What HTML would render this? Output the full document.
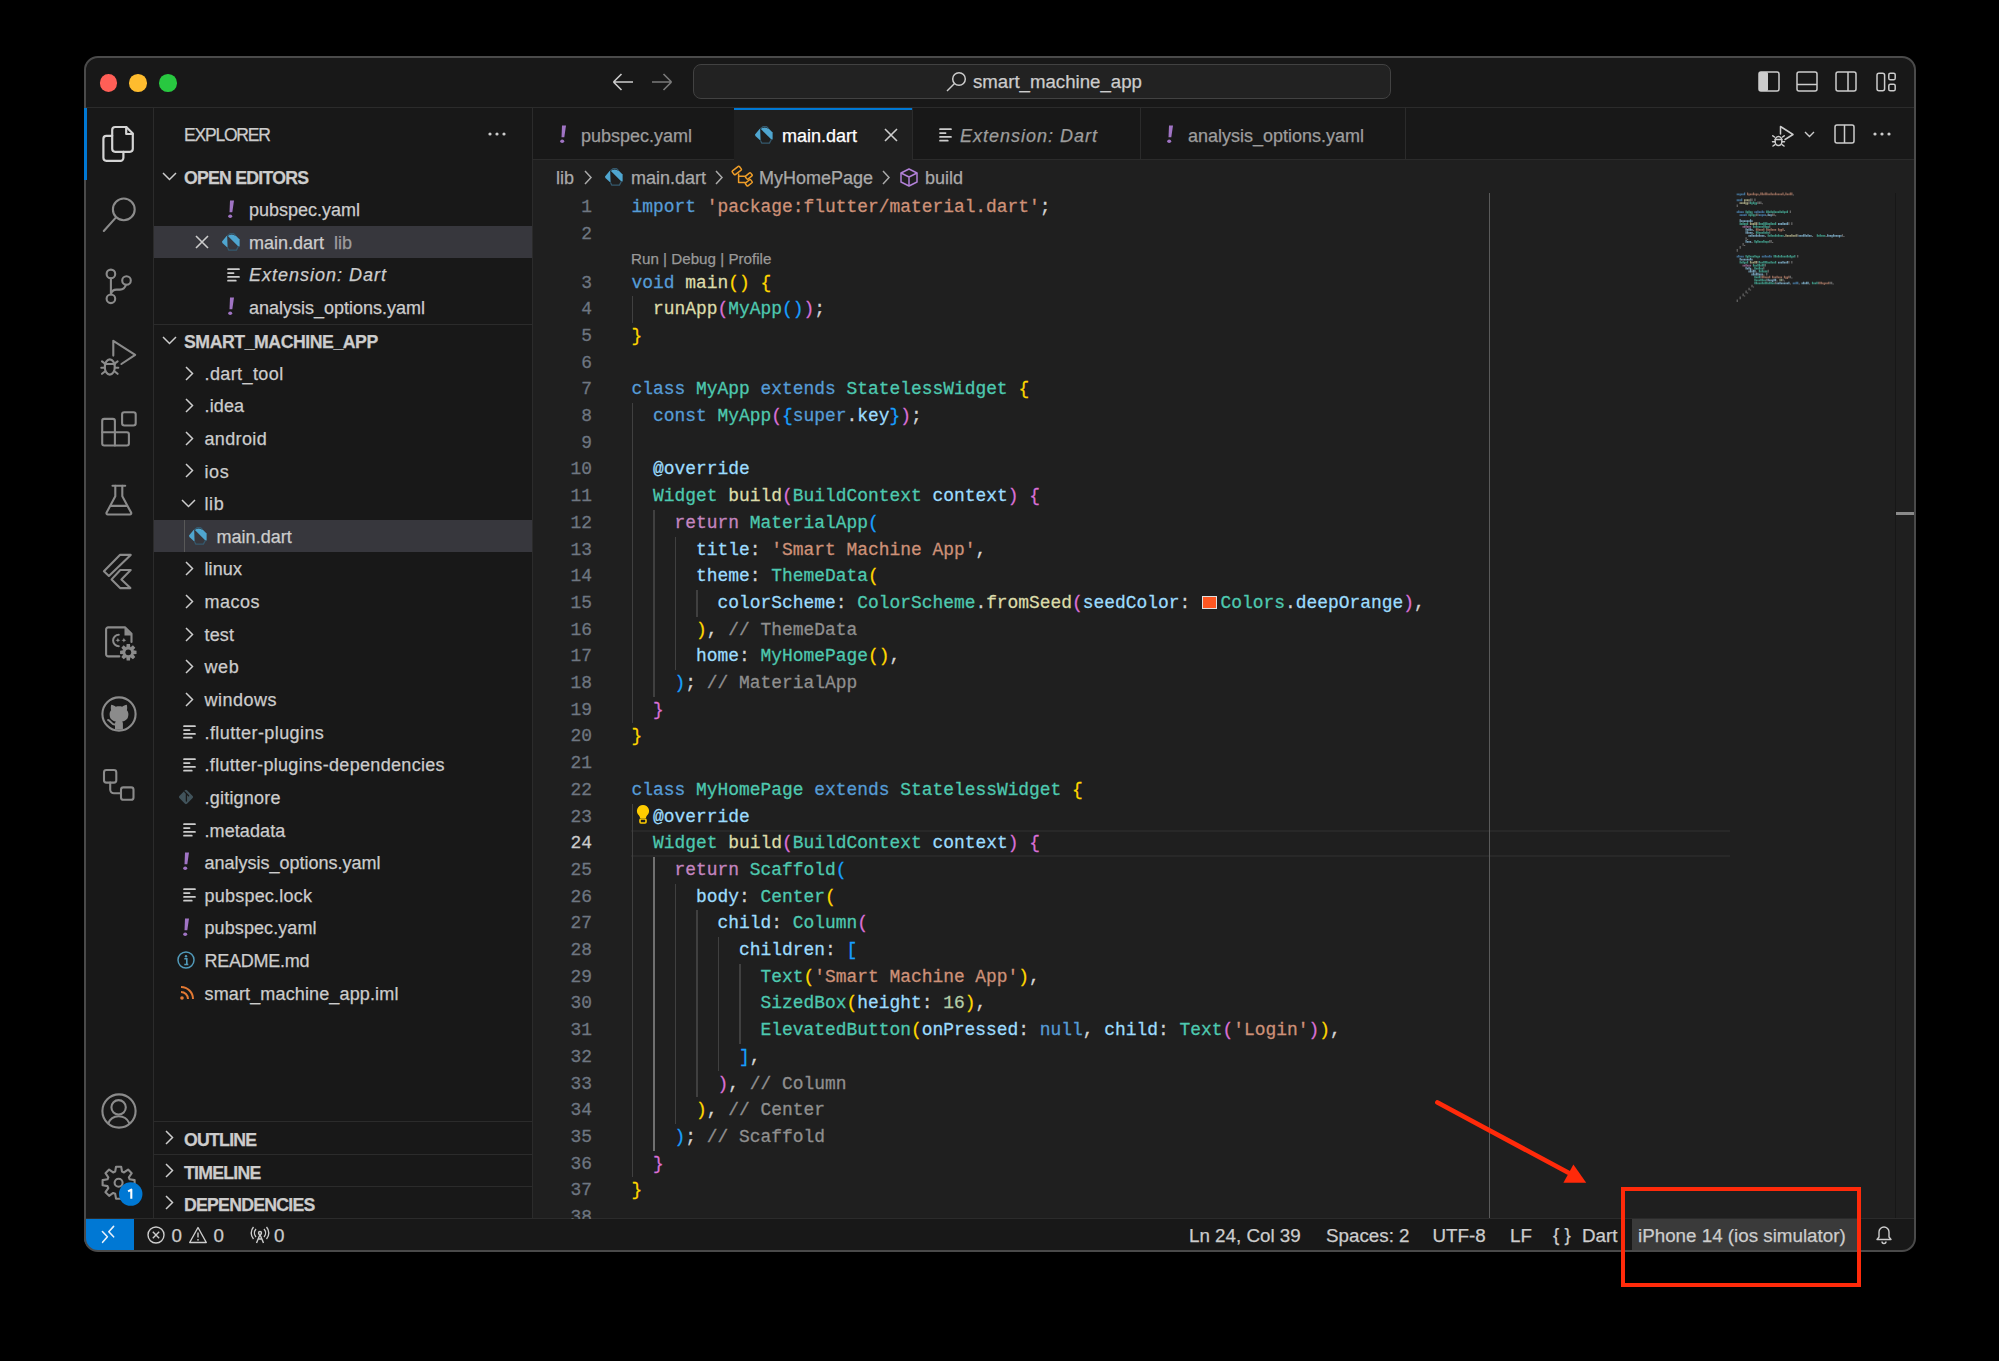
<!DOCTYPE html><html><head><meta charset='utf-8'><style>
*{margin:0;padding:0;box-sizing:border-box}
html,body{width:1999px;height:1361px;background:#000;overflow:hidden}
body{position:relative;font-family:"Liberation Sans",sans-serif;color:#cccccc;-webkit-text-stroke:0.25px currentColor}
.abs{position:absolute}
.win{position:absolute;left:84px;top:57px;width:1831px;height:1194px;border-radius:13px;overflow:hidden;background:#181818}
.winborder{position:absolute;left:83.5px;top:56px;width:1832.1px;height:1195.5px;border-radius:14px;border:2px solid #4a4a4a;pointer-events:none}
.hl{position:absolute;background:#2b2b2b}
.tx{position:absolute;white-space:pre;line-height:1}
.code{font-family:"Liberation Mono",monospace;font-size:17.91px;white-space:pre;color:#d4d4d4;-webkit-text-stroke:0.28px currentColor}
.k{color:#569cd6}.s{color:#ce9178}.f{color:#dcdcaa}.ty{color:#4ec9b0}.p{color:#9cdcfe}.r{color:#c586c0}.b1{color:#ffd700}.b2{color:#da70d6}.b3{color:#179fff}.c{color:#8f8f8f}.n{color:#b5cea8}.d{color:#d4d4d4}
.sw{display:inline-block;width:19.5px;height:10px;position:relative}
.sw i{display:none}
.row{position:absolute;left:0;width:378px;height:32.7px}
.sel{background:#37373d}
.lbl{position:absolute;font-size:18px;white-space:pre;color:#cccccc;line-height:1}
.hdr{position:absolute;font-size:17.7px;letter-spacing:-0.75px;font-weight:bold;white-space:pre;color:#cccccc;line-height:1}
svg{position:absolute;overflow:visible}
</style></head><body><div class="abs" style="left:0;top:0;width:1999px;height:1361px;clip-path:inset(57px 84px 110px 84px round 14px)"><div class="win"></div><div class="abs" style="left:533px;top:160px;width:1382px;height:1058px;background:#1f1f1f"></div><div class="hl" style="left:84px;top:107px;width:1831px;height:1px"></div><div class="hl" style="left:153px;top:108px;width:1px;height:1110px"></div><div class="hl" style="left:532px;top:108px;width:1px;height:1110px"></div><div class="hl" style="left:533px;top:159px;width:1382px;height:1px"></div><div class="hl" style="left:84px;top:1218px;width:1831px;height:1px"></div><div class="abs" style="left:99.60000000000001px;top:74.2px;width:17.6px;height:17.6px;border-radius:50%;background:#ff5f57"></div><div class="abs" style="left:129.39999999999998px;top:74.2px;width:17.6px;height:17.6px;border-radius:50%;background:#febc2e"></div><div class="abs" style="left:159.1px;top:74.2px;width:17.6px;height:17.6px;border-radius:50%;background:#28c840"></div><svg style="left:612px;top:72px" width="22" height="20"><path d="M1.5 10 H21 M1.5 10 L9.5 2 M1.5 10 L9.5 18" fill="none" stroke="#cccccc" stroke-width="1.6"/></svg><svg style="left:651px;top:72px" width="22" height="20"><path d="M20.5 10 H1 M20.5 10 L12.5 2 M20.5 10 L12.5 18" fill="none" stroke="#7a7a7a" stroke-width="1.6"/></svg><div class="abs" style="left:693px;top:64px;width:698px;height:35px;border-radius:8px;background:#222222;border:1.5px solid #424242"></div><svg style="left:945px;top:71px" width="22" height="22"><g fill="none" stroke="#cccccc" stroke-width="1.5"><circle cx="14" cy="8" r="6.3"/><path d="M9.5 12.5 L2 20"/></g></svg><div class="tx" style="left:973px;top:73px;font-size:18.65px;color:#cccccc">smart_machine_app</div><svg style="left:1758px;top:71px" width="140" height="22"><g fill="none" stroke="#cccccc" stroke-width="1.5">
    <rect x="1" y="1" width="20" height="19" rx="2"/><rect x="39" y="1" width="20" height="19" rx="2"/><path d="M39 13.5 h20"/>
    <rect x="78" y="1" width="20" height="19" rx="2"/><path d="M90 1 v19"/>
    <rect x="119" y="2.2" width="7.6" height="17.6" rx="2"/><rect x="130.8" y="2.2" width="6.4" height="6.6" rx="1.6"/><rect x="130.8" y="13.2" width="6.4" height="6.6" rx="1.6"/></g>
    <rect x="1" y="1" width="9" height="19" rx="1.5" fill="#cccccc"/></svg><div class="abs" style="left:83px;top:108px;width:3px;height:71.5px;background:#0078d4"></div><svg style="left:94px;top:118px" width="50" height="50" viewBox="0 0 50 50"><g fill="none" stroke="#d4d4d4" stroke-width="2.2" stroke-linejoin="round" stroke-linecap="round" >
    <path d="M21.2 9 H32.3 L38.8 15.5 V30.8 A3 3 0 0 1 35.8 33.8 H21.2 A3 3 0 0 1 18.2 30.8 V12 A3 3 0 0 1 21.2 9 Z"/>
    <path d="M32.2 9.2 V16 H38.6"/>
    <path d="M18.2 17.8 H12.4 A3 3 0 0 0 9.4 20.8 V39.8 A3 3 0 0 0 12.4 42.8 H26.4 A3 3 0 0 0 29.4 39.8 V33.8"/>
    </g></svg><svg style="left:94px;top:189px" width="50" height="50" viewBox="0 0 50 50"><g fill="none" stroke="#8b8b8b" stroke-width="2.1" stroke-linejoin="round" stroke-linecap="round" ><circle cx="29.8" cy="20.4" r="10.9"/><path d="M21.8 28.6 L9.8 42"/></g></svg><svg style="left:94px;top:261px" width="50" height="50" viewBox="0 0 50 50"><g fill="none" stroke="#8b8b8b" stroke-width="2.1" stroke-linejoin="round" stroke-linecap="round" ><circle cx="16.9" cy="12.9" r="4.3"/><circle cx="16.9" cy="37.8" r="4.3"/><circle cx="32.5" cy="19.5" r="4.3"/>
    <path d="M16.9 17.2 V33.5"/><path d="M32 23.8 C31 27 29 28.6 26 28.6 H22.5 C19.5 28.6 17.5 30.5 17 33"/></g></svg><svg style="left:94px;top:332px" width="50" height="50" viewBox="0 0 50 50"><g fill="none" stroke="#8b8b8b" stroke-width="2.1" stroke-linejoin="round" stroke-linecap="round" ><path d="M19.3 23.6 V8.8 L41.2 22.8 L27.4 32"/>
    <ellipse cx="15.8" cy="35" rx="5" ry="7.6"/><path d="M10.8 32 H20.8"/>
    <path d="M8 29.4 L11 31.6 M23.6 29.4 L20.6 31.6 M7.3 35.8 H10.8 M24.3 35.8 H20.8 M8 41.8 L11.2 39.2 M23.6 41.8 L20.4 39.2"/></g></svg><svg style="left:94px;top:404px" width="50" height="50" viewBox="0 0 50 50"><g fill="none" stroke="#8b8b8b" stroke-width="2.1" stroke-linejoin="round" stroke-linecap="round" stroke-linecap="butt"><path d="M10.2 14.9 H18.9 A2 2 0 0 1 20.9 16.9 V41.5 H10.2 A2 2 0 0 1 8.2 39.5 V16.9 A2 2 0 0 1 10.2 14.9 Z"/>
    <path d="M8.2 28.3 H32.9 A2 2 0 0 1 34.9 30.3 V39.5 A2 2 0 0 1 32.9 41.5 H20.9"/>
    <rect x="28.1" y="8.3" width="13.6" height="13.2" rx="2.2"/></g></svg><svg style="left:94px;top:475px" width="50" height="50" viewBox="0 0 50 50"><g fill="none" stroke="#8b8b8b" stroke-width="2.1" stroke-linejoin="round" stroke-linecap="round" ><path d="M18.5 10.7 H31.2"/><path d="M21.3 10.7 V21.3 L12.6 37.6 A1.3 1.3 0 0 0 13.8 39.5 H35.9 A1.3 1.3 0 0 0 37.1 37.6 L28.3 21.3 V10.7"/>
    <path d="M16.8 30.9 H32.6"/></g></svg><svg style="left:94px;top:547px" width="50" height="50" viewBox="0 0 50 50"><g fill="none" stroke="#8b8b8b" stroke-width="2.1" stroke-linejoin="round" stroke-linecap="round" ><path d="M25.9 7.9 H36.7 L14.9 29 L9.9 24.2 Z"/><path d="M26.3 23 H36.7 L27.4 32.5 L36.4 41.1 H26.1 L17.6 32.4 Z"/></g></svg><svg style="left:94px;top:618px" width="50" height="50" viewBox="0 0 50 50"><g fill="none" stroke="#8b8b8b" stroke-width="2.1" stroke-linejoin="round" stroke-linecap="round" stroke-linecap="butt"><path d="M25.3 38.4 H14.2 A2.1 2.1 0 0 1 12.1 36.3 V11.5 A2.1 2.1 0 0 1 14.2 9.4 H31.2 L37.5 15.7 V24"/>
    <path d="M24.8 16.8 A5.6 5.6 0 1 0 24.8 28.2" stroke-width="2"/></g>
    <path d="M30.5 9.8 L37.2 16.4 L37.2 17.5 L30.5 17.5 Z" fill="#8b8b8b"/>
    <path d="M23.9 19.8 L24.6 21.5 L26.3 22.2 L24.6 22.9 L23.9 24.6 L23.2 22.9 L21.5 22.2 L23.2 21.5 Z M29.9 19.8 L30.6 21.5 L32.3 22.2 L30.6 22.9 L29.9 24.6 L29.2 22.9 L27.5 22.2 L29.2 21.5 Z" fill="#8b8b8b"/><path d="M32.33 29.06 L32.63 26.07 L35.97 26.07 L36.27 29.06 L36.61 29.20 L38.94 27.30 L41.30 29.66 L39.40 31.99 L39.54 32.33 L42.53 32.63 L42.53 35.97 L39.54 36.27 L39.40 36.61 L41.30 38.94 L38.94 41.30 L36.61 39.40 L36.27 39.54 L35.97 42.53 L32.63 42.53 L32.33 39.54 L31.99 39.40 L29.66 41.30 L27.30 38.94 L29.20 36.61 L29.06 36.27 L26.07 35.97 L26.07 32.63 L29.06 32.33 L29.20 31.99 L27.30 29.66 L29.66 27.30 L31.99 29.20 Z" fill="#8b8b8b"/><circle cx="34.3" cy="34.3" r="2.9" fill="#181818"/></svg><svg style="left:94px;top:689px" width="50" height="50" viewBox="0 0 50 50"><g fill="none" stroke="#8b8b8b" stroke-width="2.1" stroke-linejoin="round" stroke-linecap="round" ><circle cx="25" cy="25" r="16.6"/></g><path fill="#8b8b8b" d="M21 40.6 V34.6 C21 33.8 21.3 33 21.8 32.4 C18 31.8 15.6 29.8 15.6 25.2 C15.6 23.6 16.2 22.2 17.1 21.2 C16.7 20 16.7 17.6 17.2 15.8 C18.8 15.8 20.6 16.8 21.8 17.8 C23.8 17.2 26.2 17.2 28.2 17.8 C29.4 16.8 31.2 15.8 32.8 15.8 C33.3 17.6 33.3 20 32.9 21.2 C33.8 22.2 34.4 23.6 34.4 25.2 C34.4 29.8 32 31.8 28.2 32.4 C28.7 33 28.9 33.8 28.9 34.6 V40.6 Z"/>
    <path d="M14.1 31 C16.5 31.5 17.5 35.4 20.8 35.6" fill="none" stroke="#8b8b8b" stroke-width="2" stroke-linecap="round"/></svg><svg style="left:94px;top:761px" width="50" height="50" viewBox="0 0 50 50"><g fill="none" stroke="#8b8b8b" stroke-width="2.1" stroke-linejoin="round" stroke-linecap="round" ><rect x="10" y="9" width="12.3" height="12.6" rx="2.4"/><rect x="27" y="26.4" width="12.5" height="12.4" rx="2.4"/>
    <path d="M16.2 21.6 V28.6 A3.7 3.7 0 0 0 19.9 32.3 H27"/></g></svg><svg style="left:94px;top:1086px" width="50" height="50" viewBox="0 0 50 50"><g fill="none" stroke="#8b8b8b" stroke-width="2.1" stroke-linejoin="round" stroke-linecap="round" ><circle cx="25" cy="25" r="16.6"/><circle cx="24.6" cy="21.3" r="7.2"/><path d="M14.3 37.5 C16 32.8 19.8 30.2 24.6 30.2 C29.6 30.2 33.4 32.8 35.3 37.1"/></g></svg><svg style="left:94px;top:1157px" width="50" height="50" viewBox="0 0 50 50"><g fill="none" stroke="#8b8b8b" stroke-width="2.1" stroke-linejoin="round" stroke-linecap="round" stroke-linecap="butt" stroke-linejoin="miter"><path d="M21.17 14.62 L22.02 9.71 L27.18 9.71 L28.03 14.62 L30.01 15.44 L34.08 12.57 L37.73 16.22 L34.86 20.29 L35.68 22.27 L40.59 23.12 L40.59 28.28 L35.68 29.13 L34.86 31.11 L37.73 35.18 L34.08 38.83 L30.01 35.96 L28.03 36.78 L27.18 41.69 L22.02 41.69 L21.17 36.78 L19.19 35.96 L15.12 38.83 L11.47 35.18 L14.34 31.11 L13.52 29.13 L8.61 28.28 L8.61 23.12 L13.52 22.27 L14.34 20.29 L11.47 16.22 L15.12 12.57 L19.19 15.44 Z"/><circle cx="24.6" cy="25.7" r="4"/></g><circle cx="36.7" cy="37.1" r="11.75" fill="#0078d4"/><path d="M34.1 34.4 L37.3 32.6 V41.8" fill="none" stroke="#ffffff" stroke-width="2.1" stroke-linejoin="round"/></svg><div class="tx" style="left:184px;top:126.5px;font-size:17.5px;letter-spacing:-1.2px;color:#cccccc">EXPLORER</div><svg style="left:488.0px;top:132.0px" width="18" height="4" viewBox="0 0 18 4" ><g fill="#cccccc"><circle cx="2" cy="2" r="1.6"/><circle cx="9" cy="2" r="1.6"/><circle cx="16" cy="2" r="1.6"/></g></svg><svg style="left:161.5px;top:172.0px" width="15" height="9" viewBox="0 0 15 9" ><path d="M1 1 L7.5 7.5 L14 1" fill="none" stroke="#cccccc" stroke-width="1.5"/></svg><div class="hdr" style="left:184px;top:170px">OPEN EDITORS</div><svg style="left:227.0px;top:199.5px" width="10" height="20" viewBox="0 0 10 20" ><path d="M3 0.6 L7 0.6 L5.3 12.2 L2.5 12.2 Z" fill="#a074c4"/><ellipse cx="3.2" cy="16.3" rx="2" ry="1.7" fill="#a074c4"/></svg><div class="lbl" style="left:249px;top:201.2px;">pubspec.yaml</div><div class="abs sel" style="left:154px;top:225.82999999999998px;width:378px;height:32.6px"></div><svg style="left:194.5px;top:235.13px" width="14" height="14" viewBox="0 0 14 14" ><path d="M1 1 L13 13 M13 1 L1 13" fill="none" stroke="#cccccc" stroke-width="1.6"/></svg><svg style="left:222.0px;top:233.13px" width="18" height="18" viewBox="0 0 18 18" ><path d="M5.4 2.6 L9.6 1.4 L13.6 2.6 L17.6 6.4 L17.6 13.4 L16.4 13.4 Z" fill="#4fa6d0"/>
    <path d="M4.8 2.8 L0 8.6 L0.4 10 L5.6 14.8 L5.2 3.6 Z" fill="#4fa6d0"/>
    <path d="M5.4 2.8 L8 0.7 L11.6 0.7 L13.6 2.6 M5.6 14.8 L6.8 17.1 L14.4 17.1 L16.4 13.4" fill="none" stroke="#35596d" stroke-width="1.2" stroke-linejoin="round"/></svg><div class="lbl" style="left:249px;top:233.82999999999998px;">main.dart</div><div class="lbl" style="left:334px;top:233.82999999999998px;color:#9d9d9d">lib</div><svg style="left:226.6px;top:267.76px" width="14" height="14" viewBox="0 0 14 14" ><g stroke="#cccccc" stroke-width="1.7" stroke-linecap="round"><path d="M1 1.2 h11 M1 5.1 h5.6 M1 8.9 h11 M1 12.7 h7.8"/></g></svg><div class="lbl" style="left:249px;top:266.46px;font-style:italic;letter-spacing:1px;">Extension: Dart</div><svg style="left:227.0px;top:297.39px" width="10" height="20" viewBox="0 0 10 20" ><path d="M3 0.6 L7 0.6 L5.3 12.2 L2.5 12.2 Z" fill="#a074c4"/><ellipse cx="3.2" cy="16.3" rx="2" ry="1.7" fill="#a074c4"/></svg><div class="lbl" style="left:249px;top:299.09px;">analysis_options.yaml</div><div class="hl" style="left:154px;top:323.5px;width:378px;height:1px"></div><svg style="left:161.5px;top:336.0px" width="15" height="9" viewBox="0 0 15 9" ><path d="M1 1 L7.5 7.5 L14 1" fill="none" stroke="#cccccc" stroke-width="1.5"/></svg><div class="hdr" style="left:184px;top:334px;letter-spacing:-0.45px">SMART_MACHINE_APP</div><svg style="left:184.5px;top:365.5px" width="9" height="15" viewBox="0 0 9 15" ><path d="M1 1 L7.5 7.5 L1 14" fill="none" stroke="#cccccc" stroke-width="1.5"/></svg><div class="lbl" style="left:204.5px;top:364.7px;letter-spacing:0.4px">.dart_tool</div><svg style="left:184.5px;top:398.13px" width="9" height="15" viewBox="0 0 9 15" ><path d="M1 1 L7.5 7.5 L1 14" fill="none" stroke="#cccccc" stroke-width="1.5"/></svg><div class="lbl" style="left:204.5px;top:397.33px;letter-spacing:0.15px">.idea</div><svg style="left:184.5px;top:430.76px" width="9" height="15" viewBox="0 0 9 15" ><path d="M1 1 L7.5 7.5 L1 14" fill="none" stroke="#cccccc" stroke-width="1.5"/></svg><div class="lbl" style="left:204.5px;top:429.96px;letter-spacing:0.35px">android</div><svg style="left:184.5px;top:463.39px" width="9" height="15" viewBox="0 0 9 15" ><path d="M1 1 L7.5 7.5 L1 14" fill="none" stroke="#cccccc" stroke-width="1.5"/></svg><div class="lbl" style="left:204.5px;top:462.59px;letter-spacing:0.6px">ios</div><svg style="left:180.5px;top:499.02px" width="15" height="9" viewBox="0 0 15 9" ><path d="M1 1 L7.5 7.5 L14 1" fill="none" stroke="#cccccc" stroke-width="1.5"/></svg><div class="lbl" style="left:204.5px;top:495.21999999999997px;letter-spacing:0.6px">lib</div><div class="abs sel" style="left:154px;top:519.85px;width:378px;height:32.6px"></div><div class="abs" style="left:184px;top:519.85px;width:1px;height:32.6px;background:#585858"></div><svg style="left:189.0px;top:527.15px" width="18" height="18" viewBox="0 0 18 18" ><path d="M5.4 2.6 L9.6 1.4 L13.6 2.6 L17.6 6.4 L17.6 13.4 L16.4 13.4 Z" fill="#4fa6d0"/>
    <path d="M4.8 2.8 L0 8.6 L0.4 10 L5.6 14.8 L5.2 3.6 Z" fill="#4fa6d0"/>
    <path d="M5.4 2.8 L8 0.7 L11.6 0.7 L13.6 2.6 M5.6 14.8 L6.8 17.1 L14.4 17.1 L16.4 13.4" fill="none" stroke="#35596d" stroke-width="1.2" stroke-linejoin="round"/></svg><div class="lbl" style="left:216.5px;top:527.85px;letter-spacing:0.04px">main.dart</div><svg style="left:184.5px;top:561.28px" width="9" height="15" viewBox="0 0 9 15" ><path d="M1 1 L7.5 7.5 L1 14" fill="none" stroke="#cccccc" stroke-width="1.5"/></svg><div class="lbl" style="left:204.5px;top:560.48px;letter-spacing:0.12px">linux</div><svg style="left:184.5px;top:593.9100000000001px" width="9" height="15" viewBox="0 0 9 15" ><path d="M1 1 L7.5 7.5 L1 14" fill="none" stroke="#cccccc" stroke-width="1.5"/></svg><div class="lbl" style="left:204.5px;top:593.1100000000001px;letter-spacing:0.5px">macos</div><svg style="left:184.5px;top:626.54px" width="9" height="15" viewBox="0 0 9 15" ><path d="M1 1 L7.5 7.5 L1 14" fill="none" stroke="#cccccc" stroke-width="1.5"/></svg><div class="lbl" style="left:204.5px;top:625.74px;letter-spacing:0.13px">test</div><svg style="left:184.5px;top:659.1700000000001px" width="9" height="15" viewBox="0 0 9 15" ><path d="M1 1 L7.5 7.5 L1 14" fill="none" stroke="#cccccc" stroke-width="1.5"/></svg><div class="lbl" style="left:204.5px;top:658.3700000000001px;letter-spacing:0.6px">web</div><svg style="left:184.5px;top:691.8px" width="9" height="15" viewBox="0 0 9 15" ><path d="M1 1 L7.5 7.5 L1 14" fill="none" stroke="#cccccc" stroke-width="1.5"/></svg><div class="lbl" style="left:204.5px;top:691.0px;letter-spacing:0.5px">windows</div><svg style="left:182.6px;top:724.9300000000001px" width="14" height="14" viewBox="0 0 14 14" ><g stroke="#cccccc" stroke-width="1.7" stroke-linecap="round"><path d="M1 1.2 h11 M1 5.1 h5.6 M1 8.9 h11 M1 12.7 h7.8"/></g></svg><div class="lbl" style="left:204.5px;top:723.6300000000001px;letter-spacing:0.42px">.flutter-plugins</div><svg style="left:182.6px;top:757.5600000000001px" width="14" height="14" viewBox="0 0 14 14" ><g stroke="#cccccc" stroke-width="1.7" stroke-linecap="round"><path d="M1 1.2 h11 M1 5.1 h5.6 M1 8.9 h11 M1 12.7 h7.8"/></g></svg><div class="lbl" style="left:204.5px;top:756.2600000000001px;letter-spacing:0.32px">.flutter-plugins-dependencies</div><svg style="left:177.4px;top:788.19px" width="18" height="18" viewBox="0 0 18 18" ><rect x="3.6" y="3.6" width="10.8" height="10.8" rx="1.4" transform="rotate(45 9 9)" fill="#41535b"/><path d="M7.6 3.6 L11.6 7.8 M9.4 5.6 V13" stroke="#1a1a1a" stroke-width="1.3" stroke-linecap="round"/></svg><div class="lbl" style="left:204.5px;top:788.8900000000001px;letter-spacing:0.22px">.gitignore</div><svg style="left:182.6px;top:822.82px" width="14" height="14" viewBox="0 0 14 14" ><g stroke="#cccccc" stroke-width="1.7" stroke-linecap="round"><path d="M1 1.2 h11 M1 5.1 h5.6 M1 8.9 h11 M1 12.7 h7.8"/></g></svg><div class="lbl" style="left:204.5px;top:821.5200000000001px;letter-spacing:0.09px">.metadata</div><svg style="left:182.0px;top:852.45px" width="10" height="20" viewBox="0 0 10 20" ><path d="M3 0.6 L7 0.6 L5.3 12.2 L2.5 12.2 Z" fill="#a074c4"/><ellipse cx="3.2" cy="16.3" rx="2" ry="1.7" fill="#a074c4"/></svg><div class="lbl" style="left:204.5px;top:854.1500000000001px;letter-spacing:0px">analysis_options.yaml</div><svg style="left:182.6px;top:888.08px" width="14" height="14" viewBox="0 0 14 14" ><g stroke="#cccccc" stroke-width="1.7" stroke-linecap="round"><path d="M1 1.2 h11 M1 5.1 h5.6 M1 8.9 h11 M1 12.7 h7.8"/></g></svg><div class="lbl" style="left:204.5px;top:886.7800000000001px;letter-spacing:0.22px">pubspec.lock</div><svg style="left:182.0px;top:917.71px" width="10" height="20" viewBox="0 0 10 20" ><path d="M3 0.6 L7 0.6 L5.3 12.2 L2.5 12.2 Z" fill="#a074c4"/><ellipse cx="3.2" cy="16.3" rx="2" ry="1.7" fill="#a074c4"/></svg><div class="lbl" style="left:204.5px;top:919.4100000000001px;letter-spacing:0.09px">pubspec.yaml</div><svg style="left:177.4px;top:951.34px" width="18" height="18" viewBox="0 0 18 18" ><circle cx="9" cy="9" r="8" fill="none" stroke="#519aba" stroke-width="1.5"/><circle cx="9" cy="5.2" r="1.2" fill="#519aba"/><path d="M7.3 7.8 h2.5 v5.7 M7.3 13.5 h4" fill="none" stroke="#519aba" stroke-width="1.6"/></svg><div class="lbl" style="left:204.5px;top:952.0400000000001px;letter-spacing:-0.26px">README.md</div><svg style="left:178.5px;top:984.97px" width="16" height="16" viewBox="0 0 16 16" ><g fill="none" stroke="#e37933" stroke-width="2"><path d="M2 7 a7 7 0 0 1 7 7"/><path d="M2 2 a12 12 0 0 1 12 12"/></g><circle cx="3" cy="13" r="1.8" fill="#e37933"/></svg><div class="lbl" style="left:204.5px;top:984.6700000000001px;letter-spacing:0.14px">smart_machine_app.iml</div><div class="hl" style="left:154px;top:1121.0px;width:378px;height:1px"></div><svg style="left:164.5px;top:1130.0px" width="9" height="15" viewBox="0 0 9 15" ><path d="M1 1 L7.5 7.5 L1 14" fill="none" stroke="#cccccc" stroke-width="1.5"/></svg><div class="hdr" style="left:184px;top:1132.0px">OUTLINE</div><div class="hl" style="left:154px;top:1153.6px;width:378px;height:1px"></div><svg style="left:164.5px;top:1162.6px" width="9" height="15" viewBox="0 0 9 15" ><path d="M1 1 L7.5 7.5 L1 14" fill="none" stroke="#cccccc" stroke-width="1.5"/></svg><div class="hdr" style="left:184px;top:1164.6px">TIMELINE</div><div class="hl" style="left:154px;top:1186.2px;width:378px;height:1px"></div><svg style="left:164.5px;top:1195.2px" width="9" height="15" viewBox="0 0 9 15" ><path d="M1 1 L7.5 7.5 L1 14" fill="none" stroke="#cccccc" stroke-width="1.5"/></svg><div class="hdr" style="left:184px;top:1197.2px">DEPENDENCIES</div><div class="hl" style="left:734px;top:108px;width:1px;height:51px"></div><svg style="left:558.5px;top:124.5px" width="10" height="20" viewBox="0 0 10 20" ><path d="M3 0.6 L7 0.6 L5.3 12.2 L2.5 12.2 Z" fill="#a074c4"/><ellipse cx="3.2" cy="16.3" rx="2" ry="1.7" fill="#a074c4"/></svg><div class="lbl" style="left:581px;top:126.7px;color:#9d9d9d;">pubspec.yaml</div><div class="abs" style="left:734px;top:108px;width:178px;height:52px;background:#1f1f1f"></div><div class="abs" style="left:734px;top:108px;width:178px;height:2px;background:#0078d4"></div><svg style="left:883.5px;top:127.5px" width="14" height="14" viewBox="0 0 14 14" ><path d="M1 1 L13 13 M13 1 L1 13" fill="none" stroke="#cccccc" stroke-width="1.6"/></svg><div class="hl" style="left:912px;top:108px;width:1px;height:51px"></div><svg style="left:755.0px;top:125.5px" width="18" height="18" viewBox="0 0 18 18" ><path d="M5.4 2.6 L9.6 1.4 L13.6 2.6 L17.6 6.4 L17.6 13.4 L16.4 13.4 Z" fill="#4fa6d0"/>
    <path d="M4.8 2.8 L0 8.6 L0.4 10 L5.6 14.8 L5.2 3.6 Z" fill="#4fa6d0"/>
    <path d="M5.4 2.8 L8 0.7 L11.6 0.7 L13.6 2.6 M5.6 14.8 L6.8 17.1 L14.4 17.1 L16.4 13.4" fill="none" stroke="#35596d" stroke-width="1.2" stroke-linejoin="round"/></svg><div class="lbl" style="left:782px;top:126.7px;color:#ffffff;">main.dart</div><div class="hl" style="left:1140px;top:108px;width:1px;height:51px"></div><svg style="left:938.5px;top:127.5px" width="14" height="14" viewBox="0 0 14 14" ><g stroke="#cccccc" stroke-width="1.7" stroke-linecap="round"><path d="M1 1.2 h11 M1 5.1 h5.6 M1 8.9 h11 M1 12.7 h7.8"/></g></svg><div class="lbl" style="left:960px;top:126.7px;color:#9d9d9d;font-style:italic;letter-spacing:1px;">Extension: Dart</div><div class="hl" style="left:1405px;top:108px;width:1px;height:51px"></div><svg style="left:1165.5px;top:124.5px" width="10" height="20" viewBox="0 0 10 20" ><path d="M3 0.6 L7 0.6 L5.3 12.2 L2.5 12.2 Z" fill="#a074c4"/><ellipse cx="3.2" cy="16.3" rx="2" ry="1.7" fill="#a074c4"/></svg><div class="lbl" style="left:1188px;top:126.7px;color:#9d9d9d;">analysis_options.yaml</div><svg style="left:1771.0px;top:124.5px" width="24" height="23" viewBox="0 0 24 23" ><g fill="none" stroke="#cccccc" stroke-width="1.5" stroke-linejoin="round" stroke-linecap="round"><path d="M9.5 9 V1.5 L22 9.5 L14 14.5"/>
    <ellipse cx="7.5" cy="16" rx="3.4" ry="4.6"/><path d="M4.1 14.6 H10.9 M3.5 12 L1.8 10.8 M11.5 12 L13.2 10.8 M4 16.8 H1.5 M11 16.8 H13.5 M4 19.6 L2 21 M11 19.6 L13 21"/></g></svg><svg style="left:1803.5px;top:131.0px" width="11" height="7" viewBox="0 0 11 7" ><path d="M1 1 L5.5 5.5 L10 1" fill="none" stroke="#cccccc" stroke-width="1.4"/></svg><svg style="left:1833.5px;top:124.0px" width="21" height="20" viewBox="0 0 21 20" ><g fill="none" stroke="#cccccc" stroke-width="1.5"><rect x="1" y="1" width="19" height="18" rx="2"/><path d="M10.5 1 v18"/></g></svg><svg style="left:1873.0px;top:132.0px" width="18" height="4" viewBox="0 0 18 4" ><g fill="#cccccc"><circle cx="2" cy="2" r="1.6"/><circle cx="9" cy="2" r="1.6"/><circle cx="16" cy="2" r="1.6"/></g></svg><div class="lbl" style="left:556px;top:168.5px;color:#a9a9a9">lib</div><svg style="left:583.5px;top:169.5px" width="9" height="15" viewBox="0 0 9 15" ><path d="M1 1 L7 7.5 L1 14" fill="none" stroke="#a9a9a9" stroke-width="1.5"/></svg><svg style="left:604.5px;top:168.0px" width="18" height="18" viewBox="0 0 18 18" ><path d="M5.4 2.6 L9.6 1.4 L13.6 2.6 L17.6 6.4 L17.6 13.4 L16.4 13.4 Z" fill="#4fa6d0"/>
    <path d="M4.8 2.8 L0 8.6 L0.4 10 L5.6 14.8 L5.2 3.6 Z" fill="#4fa6d0"/>
    <path d="M5.4 2.8 L8 0.7 L11.6 0.7 L13.6 2.6 M5.6 14.8 L6.8 17.1 L14.4 17.1 L16.4 13.4" fill="none" stroke="#35596d" stroke-width="1.2" stroke-linejoin="round"/></svg><div class="lbl" style="left:631px;top:168.5px;color:#a9a9a9">main.dart</div><svg style="left:714.5px;top:169.5px" width="9" height="15" viewBox="0 0 9 15" ><path d="M1 1 L7 7.5 L1 14" fill="none" stroke="#a9a9a9" stroke-width="1.5"/></svg><svg style="left:728.0px;top:164.0px" width="28" height="24" viewBox="0 0 28 24" ><g fill="none" stroke="#ee9d28" stroke-width="1.5" stroke-linejoin="round">
    <rect x="-4.5" y="-2.3" width="9" height="4.6" rx="0.8" transform="translate(8.8 6.5) rotate(-38)"/>
    <rect x="-3.3" y="-1.9" width="6.6" height="3.8" rx="0.8" transform="translate(20.8 12) rotate(-38)"/>
    <rect x="-3.3" y="-1.9" width="6.6" height="3.8" rx="0.8" transform="translate(20.8 18.8) rotate(-38)"/>
    <path d="M10.6 9.4 V18.6 H17.6 M10.6 12.3 H17.6"/></g></svg><div class="lbl" style="left:759px;top:168.5px;color:#a9a9a9">MyHomePage</div><svg style="left:881.5px;top:169.5px" width="9" height="15" viewBox="0 0 9 15" ><path d="M1 1 L7 7.5 L1 14" fill="none" stroke="#a9a9a9" stroke-width="1.5"/></svg><svg style="left:900.0px;top:167.5px" width="18" height="19" viewBox="0 0 18 19" ><g fill="none" stroke="#b180d7" stroke-width="1.5" stroke-linejoin="round"><path d="M9 1 L17 5 V14 L9 18 L1 14 V5 Z"/><path d="M1 5 L9 9 L17 5 M9 9 V18"/></g></svg><div class="lbl" style="left:925px;top:168.5px;color:#a9a9a9">build</div><div class="abs" style="left:631px;top:830.2px;width:1099px;height:26.7px;border-top:2px solid #282828;border-bottom:2px solid #282828"></div><div class="abs" style="left:1488.5px;top:193px;width:1.5px;height:1025px;background:#5a5a5a"></div><div class="abs" style="left:631.5px;top:296.20000000000005px;width:1.5px;height:26.69999999999999px;background:#404040"></div><div class="abs" style="left:631.5px;top:403.0px;width:1.5px;height:320.4px;background:#404040"></div><div class="abs" style="left:653.0px;top:509.8px;width:1.5px;height:186.90000000000003px;background:#404040"></div><div class="abs" style="left:674.5px;top:536.5px;width:1.5px;height:133.5000000000001px;background:#404040"></div><div class="abs" style="left:696.0px;top:589.9px;width:1.5px;height:26.700000000000045px;background:#404040"></div><div class="abs" style="left:631.5px;top:803.5px;width:1.5px;height:373.79999999999995px;background:#404040"></div><div class="abs" style="left:653.0px;top:856.9px;width:1.5px;height:293.69999999999993px;background:#707070"></div><div class="abs" style="left:674.5px;top:883.6px;width:1.5px;height:240.29999999999984px;background:#404040"></div><div class="abs" style="left:696.0px;top:910.3px;width:1.5px;height:186.9000000000001px;background:#404040"></div><div class="abs" style="left:717.5px;top:937.0px;width:1.5px;height:133.5px;background:#404040"></div><div class="abs" style="left:739.0px;top:963.7px;width:1.5px;height:80.09999999999991px;background:#404040"></div><div class="code abs" style="left:520px;width:72px;text-align:right;top:194.0px;line-height:26.7px;color:#6e7681">1</div><div class="code abs" style="left:520px;width:72px;text-align:right;top:220.7px;line-height:26.7px;color:#6e7681">2</div><div class="code abs" style="left:520px;width:72px;text-align:right;top:269.5px;line-height:26.7px;color:#6e7681">3</div><div class="code abs" style="left:520px;width:72px;text-align:right;top:296.20000000000005px;line-height:26.7px;color:#6e7681">4</div><div class="code abs" style="left:520px;width:72px;text-align:right;top:322.90000000000003px;line-height:26.7px;color:#6e7681">5</div><div class="code abs" style="left:520px;width:72px;text-align:right;top:349.6px;line-height:26.7px;color:#6e7681">6</div><div class="code abs" style="left:520px;width:72px;text-align:right;top:376.3px;line-height:26.7px;color:#6e7681">7</div><div class="code abs" style="left:520px;width:72px;text-align:right;top:403.0px;line-height:26.7px;color:#6e7681">8</div><div class="code abs" style="left:520px;width:72px;text-align:right;top:429.70000000000005px;line-height:26.7px;color:#6e7681">9</div><div class="code abs" style="left:520px;width:72px;text-align:right;top:456.4px;line-height:26.7px;color:#6e7681">10</div><div class="code abs" style="left:520px;width:72px;text-align:right;top:483.1px;line-height:26.7px;color:#6e7681">11</div><div class="code abs" style="left:520px;width:72px;text-align:right;top:509.8px;line-height:26.7px;color:#6e7681">12</div><div class="code abs" style="left:520px;width:72px;text-align:right;top:536.5px;line-height:26.7px;color:#6e7681">13</div><div class="code abs" style="left:520px;width:72px;text-align:right;top:563.1999999999999px;line-height:26.7px;color:#6e7681">14</div><div class="code abs" style="left:520px;width:72px;text-align:right;top:589.9px;line-height:26.7px;color:#6e7681">15</div><div class="code abs" style="left:520px;width:72px;text-align:right;top:616.6px;line-height:26.7px;color:#6e7681">16</div><div class="code abs" style="left:520px;width:72px;text-align:right;top:643.3000000000001px;line-height:26.7px;color:#6e7681">17</div><div class="code abs" style="left:520px;width:72px;text-align:right;top:670.0px;line-height:26.7px;color:#6e7681">18</div><div class="code abs" style="left:520px;width:72px;text-align:right;top:696.6999999999999px;line-height:26.7px;color:#6e7681">19</div><div class="code abs" style="left:520px;width:72px;text-align:right;top:723.4px;line-height:26.7px;color:#6e7681">20</div><div class="code abs" style="left:520px;width:72px;text-align:right;top:750.1px;line-height:26.7px;color:#6e7681">21</div><div class="code abs" style="left:520px;width:72px;text-align:right;top:776.8px;line-height:26.7px;color:#6e7681">22</div><div class="code abs" style="left:520px;width:72px;text-align:right;top:803.5px;line-height:26.7px;color:#6e7681">23</div><div class="code abs" style="left:520px;width:72px;text-align:right;top:830.2px;line-height:26.7px;color:#cccccc">24</div><div class="code abs" style="left:520px;width:72px;text-align:right;top:856.9px;line-height:26.7px;color:#6e7681">25</div><div class="code abs" style="left:520px;width:72px;text-align:right;top:883.6px;line-height:26.7px;color:#6e7681">26</div><div class="code abs" style="left:520px;width:72px;text-align:right;top:910.3px;line-height:26.7px;color:#6e7681">27</div><div class="code abs" style="left:520px;width:72px;text-align:right;top:937.0px;line-height:26.7px;color:#6e7681">28</div><div class="code abs" style="left:520px;width:72px;text-align:right;top:963.7px;line-height:26.7px;color:#6e7681">29</div><div class="code abs" style="left:520px;width:72px;text-align:right;top:990.4px;line-height:26.7px;color:#6e7681">30</div><div class="code abs" style="left:520px;width:72px;text-align:right;top:1017.1px;line-height:26.7px;color:#6e7681">31</div><div class="code abs" style="left:520px;width:72px;text-align:right;top:1043.8px;line-height:26.7px;color:#6e7681">32</div><div class="code abs" style="left:520px;width:72px;text-align:right;top:1070.5px;line-height:26.7px;color:#6e7681">33</div><div class="code abs" style="left:520px;width:72px;text-align:right;top:1097.1999999999998px;line-height:26.7px;color:#6e7681">34</div><div class="code abs" style="left:520px;width:72px;text-align:right;top:1123.8999999999999px;line-height:26.7px;color:#6e7681">35</div><div class="code abs" style="left:520px;width:72px;text-align:right;top:1150.6px;line-height:26.7px;color:#6e7681">36</div><div class="code abs" style="left:520px;width:72px;text-align:right;top:1177.2999999999997px;line-height:26.7px;color:#6e7681">37</div><div class="code abs" style="left:520px;width:72px;text-align:right;top:1204.0px;line-height:26.7px;color:#6e7681">38</div><div class="code abs" style="left:631.5px;top:194.0px;line-height:26.7px"><span class="k">import</span> <span class="s">&#x27;package:flutter/material.dart&#x27;</span>;</div><div class="code abs" style="left:631.5px;top:269.5px;line-height:26.7px"><span class="k">void</span> <span class="f">main</span><span class="b1">()</span> <span class="b1">{</span></div><div class="code abs" style="left:631.5px;top:296.20000000000005px;line-height:26.7px">  <span class="f">runApp</span><span class="b2">(</span><span class="ty">MyApp</span><span class="b3">()</span><span class="b2">)</span>;</div><div class="code abs" style="left:631.5px;top:322.90000000000003px;line-height:26.7px"><span class="b1">}</span></div><div class="code abs" style="left:631.5px;top:376.3px;line-height:26.7px"><span class="k">class</span> <span class="ty">MyApp</span> <span class="k">extends</span> <span class="ty">StatelessWidget</span> <span class="b1">{</span></div><div class="code abs" style="left:631.5px;top:403.0px;line-height:26.7px">  <span class="k">const</span> <span class="ty">MyApp</span><span class="b2">(</span><span class="b3">{</span><span class="k">super</span>.<span class="p">key</span><span class="b3">}</span><span class="b2">)</span>;</div><div class="code abs" style="left:631.5px;top:456.4px;line-height:26.7px">  <span class="p">@override</span></div><div class="code abs" style="left:631.5px;top:483.1px;line-height:26.7px">  <span class="ty">Widget</span> <span class="f">build</span><span class="b2">(</span><span class="ty">BuildContext</span> <span class="p">context</span><span class="b2">)</span> <span class="b2">{</span></div><div class="code abs" style="left:631.5px;top:509.8px;line-height:26.7px">    <span class="r">return</span> <span class="ty">MaterialApp</span><span class="b3">(</span></div><div class="code abs" style="left:631.5px;top:536.5px;line-height:26.7px">      <span class="p">title</span>: <span class="s">&#x27;Smart Machine App&#x27;</span>,</div><div class="code abs" style="left:631.5px;top:563.1999999999999px;line-height:26.7px">      <span class="p">theme</span>: <span class="ty">ThemeData</span><span class="b1">(</span></div><div class="code abs" style="left:631.5px;top:589.9px;line-height:26.7px">        <span class="p">colorScheme</span>: <span class="ty">ColorScheme</span>.<span class="f">fromSeed</span><span class="b2">(</span><span class="p">seedColor</span>: <span class="sw"><i></i></span><span class="ty">Colors</span>.<span class="p">deepOrange</span><span class="b2">)</span>,</div><div class="code abs" style="left:631.5px;top:616.6px;line-height:26.7px">      <span class="b1">)</span>, <span class="c">// ThemeData</span></div><div class="code abs" style="left:631.5px;top:643.3000000000001px;line-height:26.7px">      <span class="p">home</span>: <span class="ty">MyHomePage</span><span class="b1">()</span>,</div><div class="code abs" style="left:631.5px;top:670.0px;line-height:26.7px">    <span class="b3">)</span>; <span class="c">// MaterialApp</span></div><div class="code abs" style="left:631.5px;top:696.6999999999999px;line-height:26.7px">  <span class="b2">}</span></div><div class="code abs" style="left:631.5px;top:723.4px;line-height:26.7px"><span class="b1">}</span></div><div class="code abs" style="left:631.5px;top:776.8px;line-height:26.7px"><span class="k">class</span> <span class="ty">MyHomePage</span> <span class="k">extends</span> <span class="ty">StatelessWidget</span> <span class="b1">{</span></div><div class="code abs" style="left:631.5px;top:803.5px;line-height:26.7px">  <span class="p">@override</span></div><div class="code abs" style="left:631.5px;top:830.2px;line-height:26.7px">  <span class="ty">Widget</span> <span class="f">build</span><span class="b2">(</span><span class="ty">BuildContext</span> <span class="p">context</span><span class="b2">)</span> <span class="b2">{</span></div><div class="code abs" style="left:631.5px;top:856.9px;line-height:26.7px">    <span class="r">return</span> <span class="ty">Scaffold</span><span class="b3">(</span></div><div class="code abs" style="left:631.5px;top:883.6px;line-height:26.7px">      <span class="p">body</span>: <span class="ty">Center</span><span class="b1">(</span></div><div class="code abs" style="left:631.5px;top:910.3px;line-height:26.7px">        <span class="p">child</span>: <span class="ty">Column</span><span class="b2">(</span></div><div class="code abs" style="left:631.5px;top:937.0px;line-height:26.7px">          <span class="p">children</span>: <span class="b3">[</span></div><div class="code abs" style="left:631.5px;top:963.7px;line-height:26.7px">            <span class="ty">Text</span><span class="b1">(</span><span class="s">&#x27;Smart Machine App&#x27;</span><span class="b1">)</span>,</div><div class="code abs" style="left:631.5px;top:990.4px;line-height:26.7px">            <span class="ty">SizedBox</span><span class="b1">(</span><span class="p">height</span>: <span class="n">16</span><span class="b1">)</span>,</div><div class="code abs" style="left:631.5px;top:1017.1px;line-height:26.7px">            <span class="ty">ElevatedButton</span><span class="b1">(</span><span class="p">onPressed</span>: <span class="k">null</span>, <span class="p">child</span>: <span class="ty">Text</span><span class="b2">(</span><span class="s">&#x27;Login&#x27;</span><span class="b2">)</span><span class="b1">)</span>,</div><div class="code abs" style="left:631.5px;top:1043.8px;line-height:26.7px">          <span class="b3">]</span>,</div><div class="code abs" style="left:631.5px;top:1070.5px;line-height:26.7px">        <span class="b2">)</span>, <span class="c">// Column</span></div><div class="code abs" style="left:631.5px;top:1097.1999999999998px;line-height:26.7px">      <span class="b1">)</span>, <span class="c">// Center</span></div><div class="code abs" style="left:631.5px;top:1123.8999999999999px;line-height:26.7px">    <span class="b3">)</span>; <span class="c">// Scaffold</span></div><div class="code abs" style="left:631.5px;top:1150.6px;line-height:26.7px">  <span class="b2">}</span></div><div class="code abs" style="left:631.5px;top:1177.2999999999997px;line-height:26.7px"><span class="b1">}</span></div><div class="abs" style="left:1202.3px;top:595.5px;width:15.2px;height:13.3px;background:#ff5722;border:1.2px solid #e0e0e0"></div><div class="tx" style="left:631px;top:250.89999999999998px;font-size:15.2px;color:#999999">Run | Debug | Profile</div><svg style="left:636.0px;top:804.0500000000001px" width="14" height="20" viewBox="0 0 14 20" ><path d="M7 1 a6 6 0 0 1 4 10.5 c-0.7 0.7 -1 1.5 -1 2.5 H4 c0 -1 -0.3 -1.8 -1 -2.5 A6 6 0 0 1 7 1z" fill="#ffcc00"/><rect x="4" y="15" width="6" height="4" rx="1" fill="none" stroke="#ffcc00" stroke-width="1.6"/></svg><svg width="1999" height="1361" style="left:0;top:0"><path d="M1736.65 193.40h1.2v1.8h-1.2zM1738.12 193.40h1.2v1.8h-1.2zM1739.60 193.40h1.2v2.4h-1.2zM1741.08 193.40h1.2v1.8h-1.2zM1742.55 193.40h1.2v1.8h-1.2zM1744.03 192.60h1.2v2.6h-1.2zM1736.65 199.34h1.2v1.8h-1.2zM1738.12 199.34h1.2v1.8h-1.2zM1739.60 199.34h1.2v1.8h-1.2zM1741.08 198.54h1.2v2.6h-1.2zM1736.65 211.22h1.2v1.8h-1.2zM1738.12 210.42h1.2v2.6h-1.2zM1739.60 211.22h1.2v1.8h-1.2zM1741.08 211.22h1.2v1.8h-1.2zM1742.55 211.22h1.2v1.8h-1.2zM1754.35 211.22h1.2v1.8h-1.2zM1755.83 211.22h1.2v1.8h-1.2zM1757.30 210.42h1.2v2.6h-1.2zM1758.78 211.22h1.2v1.8h-1.2zM1760.25 211.22h1.2v1.8h-1.2zM1761.73 210.42h1.2v2.6h-1.2zM1763.20 211.22h1.2v1.8h-1.2zM1739.60 214.19h1.2v1.8h-1.2zM1741.08 214.19h1.2v1.8h-1.2zM1742.55 214.19h1.2v1.8h-1.2zM1744.03 214.19h1.2v1.8h-1.2zM1745.50 213.39h1.2v2.6h-1.2zM1758.78 214.19h1.2v1.8h-1.2zM1760.25 214.19h1.2v1.8h-1.2zM1761.73 214.19h1.2v2.4h-1.2zM1763.20 214.19h1.2v1.8h-1.2zM1764.68 214.19h1.2v1.8h-1.2zM1736.65 255.77h1.2v1.8h-1.2zM1738.12 254.97h1.2v2.6h-1.2zM1739.60 255.77h1.2v1.8h-1.2zM1741.08 255.77h1.2v1.8h-1.2zM1742.55 255.77h1.2v1.8h-1.2zM1761.73 255.77h1.2v1.8h-1.2zM1763.20 255.77h1.2v1.8h-1.2zM1764.68 254.97h1.2v2.6h-1.2zM1766.15 255.77h1.2v1.8h-1.2zM1767.62 255.77h1.2v1.8h-1.2zM1769.10 254.97h1.2v2.6h-1.2zM1770.58 255.77h1.2v1.8h-1.2zM1792.70 282.50h1.2v1.8h-1.2zM1794.18 282.50h1.2v1.8h-1.2zM1795.65 281.70h1.2v2.6h-1.2zM1797.12 281.70h1.2v2.6h-1.2z" fill="#569cd6" fill-opacity="0.65"/><path d="M1746.98 192.60h1.2v2.6h-1.2zM1748.45 193.40h1.2v2.4h-1.2zM1749.93 193.40h1.2v1.8h-1.2zM1751.40 193.40h1.2v1.8h-1.2zM1752.88 192.60h1.2v2.6h-1.2zM1754.35 193.40h1.2v1.8h-1.2zM1755.83 193.40h1.2v2.4h-1.2zM1757.30 193.40h1.2v1.8h-1.2zM1758.78 194.40h1.2v1.0h-1.2zM1760.25 192.60h1.2v2.6h-1.2zM1761.73 192.60h1.2v2.6h-1.2zM1763.20 193.40h1.2v1.8h-1.2zM1764.68 192.60h1.2v2.6h-1.2zM1766.15 192.60h1.2v2.6h-1.2zM1767.62 193.40h1.2v1.8h-1.2zM1769.10 193.40h1.2v1.8h-1.2zM1770.58 192.60h1.2v2.6h-1.2zM1772.05 193.40h1.2v1.8h-1.2zM1773.53 193.40h1.2v1.8h-1.2zM1775.00 192.60h1.2v2.6h-1.2zM1776.48 193.40h1.2v1.8h-1.2zM1777.95 193.40h1.2v1.8h-1.2zM1779.43 193.40h1.2v1.8h-1.2zM1780.90 193.40h1.2v1.8h-1.2zM1782.38 192.60h1.2v2.6h-1.2zM1783.85 194.40h1.2v1.0h-1.2zM1785.33 192.60h1.2v2.6h-1.2zM1786.80 193.40h1.2v1.8h-1.2zM1788.28 193.40h1.2v1.8h-1.2zM1789.75 192.60h1.2v2.6h-1.2zM1791.23 192.60h1.2v2.6h-1.2zM1755.83 228.24h1.2v2.6h-1.2zM1757.30 228.24h1.2v2.6h-1.2zM1758.78 229.04h1.2v1.8h-1.2zM1760.25 229.04h1.2v1.8h-1.2zM1761.73 229.04h1.2v1.8h-1.2zM1763.20 228.24h1.2v2.6h-1.2zM1766.15 228.24h1.2v2.6h-1.2zM1767.62 229.04h1.2v1.8h-1.2zM1769.10 229.04h1.2v1.8h-1.2zM1770.58 228.24h1.2v2.6h-1.2zM1772.05 229.04h1.2v1.8h-1.2zM1773.53 229.04h1.2v1.8h-1.2zM1775.00 229.04h1.2v1.8h-1.2zM1777.95 228.24h1.2v2.6h-1.2zM1779.43 229.04h1.2v2.4h-1.2zM1780.90 229.04h1.2v2.4h-1.2zM1782.38 228.24h1.2v2.6h-1.2zM1761.73 275.76h1.2v2.6h-1.2zM1763.20 275.76h1.2v2.6h-1.2zM1764.68 276.56h1.2v1.8h-1.2zM1766.15 276.56h1.2v1.8h-1.2zM1767.62 276.56h1.2v1.8h-1.2zM1769.10 275.76h1.2v2.6h-1.2zM1772.05 275.76h1.2v2.6h-1.2zM1773.53 276.56h1.2v1.8h-1.2zM1775.00 276.56h1.2v1.8h-1.2zM1776.48 275.76h1.2v2.6h-1.2zM1777.95 276.56h1.2v1.8h-1.2zM1779.43 276.56h1.2v1.8h-1.2zM1780.90 276.56h1.2v1.8h-1.2zM1783.85 275.76h1.2v2.6h-1.2zM1785.33 276.56h1.2v2.4h-1.2zM1786.80 276.56h1.2v2.4h-1.2zM1788.28 275.76h1.2v2.6h-1.2zM1819.25 281.70h1.2v2.6h-1.2zM1820.73 281.70h1.2v2.6h-1.2zM1822.20 282.50h1.2v1.8h-1.2zM1823.68 282.50h1.2v2.4h-1.2zM1825.15 282.50h1.2v1.8h-1.2zM1826.62 282.50h1.2v1.8h-1.2zM1828.10 281.70h1.2v2.6h-1.2z" fill="#ce9178" fill-opacity="0.65"/><path d="M1792.70 194.40h1.2v1.0h-1.2zM1749.93 198.54h1.2v2.6h-1.2zM1751.40 198.54h1.2v2.6h-1.2zM1754.35 198.54h1.2v2.6h-1.2zM1748.45 201.51h1.2v2.6h-1.2zM1757.30 201.51h1.2v2.6h-1.2zM1758.78 201.51h1.2v2.6h-1.2zM1760.25 201.51h1.2v2.6h-1.2zM1761.73 203.31h1.2v1.0h-1.2zM1736.65 204.48h1.2v2.6h-1.2zM1789.75 210.42h1.2v2.6h-1.2zM1755.83 213.39h1.2v2.6h-1.2zM1757.30 213.39h1.2v2.6h-1.2zM1766.15 215.19h1.2v1.0h-1.2zM1772.05 213.39h1.2v2.6h-1.2zM1773.53 213.39h1.2v2.6h-1.2zM1775.00 215.19h1.2v1.0h-1.2zM1757.30 222.30h1.2v2.6h-1.2zM1788.28 222.30h1.2v2.6h-1.2zM1791.23 222.30h1.2v2.6h-1.2zM1769.10 225.27h1.2v2.6h-1.2zM1752.88 230.04h1.2v1.0h-1.2zM1783.85 230.04h1.2v1.0h-1.2zM1752.88 233.01h1.2v1.0h-1.2zM1769.10 231.21h1.2v2.6h-1.2zM1764.68 235.98h1.2v1.0h-1.2zM1783.85 235.98h1.2v1.0h-1.2zM1797.12 234.18h1.2v2.6h-1.2zM1811.88 235.98h1.2v1.0h-1.2zM1825.59 235.98h1.2v1.0h-1.2zM1841.82 234.18h1.2v2.6h-1.2zM1843.29 235.98h1.2v1.0h-1.2zM1745.50 237.15h1.2v2.6h-1.2zM1746.98 238.95h1.2v1.0h-1.2zM1751.40 241.92h1.2v1.0h-1.2zM1769.10 240.12h1.2v2.6h-1.2zM1770.58 240.12h1.2v2.6h-1.2zM1772.05 241.92h1.2v1.0h-1.2zM1742.55 243.09h1.2v2.6h-1.2zM1744.03 244.89h1.2v1.0h-1.2zM1739.60 246.06h1.2v2.6h-1.2zM1736.65 249.03h1.2v2.6h-1.2zM1797.12 254.97h1.2v2.6h-1.2zM1757.30 260.91h1.2v2.6h-1.2zM1788.28 260.91h1.2v2.6h-1.2zM1791.23 260.91h1.2v2.6h-1.2zM1764.68 263.88h1.2v2.6h-1.2zM1751.40 268.65h1.2v1.0h-1.2zM1763.20 266.85h1.2v2.6h-1.2zM1755.83 271.62h1.2v1.0h-1.2zM1767.62 269.82h1.2v2.6h-1.2zM1763.20 274.59h1.2v1.0h-1.2zM1766.15 272.79h1.2v2.6h-1.2zM1760.25 275.76h1.2v2.6h-1.2zM1789.75 275.76h1.2v2.6h-1.2zM1791.23 277.56h1.2v1.0h-1.2zM1766.15 278.73h1.2v2.6h-1.2zM1776.48 280.53h1.2v1.0h-1.2zM1782.38 278.73h1.2v2.6h-1.2zM1783.85 280.53h1.2v1.0h-1.2zM1775.00 281.70h1.2v2.6h-1.2zM1789.75 283.50h1.2v1.0h-1.2zM1798.60 283.50h1.2v1.0h-1.2zM1808.93 283.50h1.2v1.0h-1.2zM1817.78 281.70h1.2v2.6h-1.2zM1829.58 281.70h1.2v2.6h-1.2zM1831.05 281.70h1.2v2.6h-1.2zM1832.53 283.50h1.2v1.0h-1.2zM1751.40 284.67h1.2v2.6h-1.2zM1752.88 286.47h1.2v1.0h-1.2zM1748.45 287.64h1.2v2.6h-1.2zM1749.93 289.44h1.2v1.0h-1.2zM1745.50 290.61h1.2v2.6h-1.2zM1746.98 292.41h1.2v1.0h-1.2zM1742.55 293.58h1.2v2.6h-1.2zM1744.03 295.38h1.2v1.0h-1.2zM1739.60 296.55h1.2v2.6h-1.2zM1736.65 299.52h1.2v2.6h-1.2z" fill="#d4d4d4" fill-opacity="0.4"/><path d="M1744.03 199.34h1.2v1.8h-1.2zM1745.50 199.34h1.2v1.8h-1.2zM1746.98 199.34h1.2v1.8h-1.2zM1748.45 199.34h1.2v1.8h-1.2zM1739.60 202.31h1.2v1.8h-1.2zM1741.08 202.31h1.2v1.8h-1.2zM1742.55 202.31h1.2v1.8h-1.2zM1744.03 201.51h1.2v2.6h-1.2zM1745.50 202.31h1.2v2.4h-1.2zM1746.98 202.31h1.2v2.4h-1.2zM1749.93 222.30h1.2v2.6h-1.2zM1751.40 223.10h1.2v1.8h-1.2zM1752.88 223.10h1.2v1.8h-1.2zM1754.35 222.30h1.2v2.6h-1.2zM1755.83 222.30h1.2v2.6h-1.2zM1785.33 234.18h1.2v2.6h-1.2zM1786.80 234.98h1.2v1.8h-1.2zM1788.28 234.98h1.2v1.8h-1.2zM1789.75 234.98h1.2v1.8h-1.2zM1791.23 234.18h1.2v2.6h-1.2zM1792.70 234.98h1.2v1.8h-1.2zM1794.18 234.98h1.2v1.8h-1.2zM1795.65 234.18h1.2v2.6h-1.2zM1749.93 260.91h1.2v2.6h-1.2zM1751.40 261.71h1.2v1.8h-1.2zM1752.88 261.71h1.2v1.8h-1.2zM1754.35 260.91h1.2v2.6h-1.2zM1755.83 260.91h1.2v2.6h-1.2z" fill="#dcdcaa" fill-opacity="0.65"/><path d="M1749.93 201.51h1.2v2.6h-1.2zM1751.40 202.31h1.2v2.4h-1.2zM1752.88 201.51h1.2v2.6h-1.2zM1754.35 202.31h1.2v2.4h-1.2zM1755.83 202.31h1.2v2.4h-1.2zM1745.50 210.42h1.2v2.6h-1.2zM1746.98 211.22h1.2v2.4h-1.2zM1748.45 210.42h1.2v2.6h-1.2zM1749.93 211.22h1.2v2.4h-1.2zM1751.40 211.22h1.2v2.4h-1.2zM1766.15 210.42h1.2v2.6h-1.2zM1767.62 210.42h1.2v2.6h-1.2zM1769.10 211.22h1.2v1.8h-1.2zM1770.58 210.42h1.2v2.6h-1.2zM1772.05 211.22h1.2v1.8h-1.2zM1773.53 210.42h1.2v2.6h-1.2zM1775.00 211.22h1.2v1.8h-1.2zM1776.48 211.22h1.2v1.8h-1.2zM1777.95 211.22h1.2v1.8h-1.2zM1779.43 210.42h1.2v2.6h-1.2zM1780.90 211.22h1.2v1.8h-1.2zM1782.38 210.42h1.2v2.6h-1.2zM1783.85 211.22h1.2v2.4h-1.2zM1785.33 211.22h1.2v1.8h-1.2zM1786.80 210.42h1.2v2.6h-1.2zM1748.45 213.39h1.2v2.6h-1.2zM1749.93 214.19h1.2v2.4h-1.2zM1751.40 213.39h1.2v2.6h-1.2zM1752.88 214.19h1.2v2.4h-1.2zM1754.35 214.19h1.2v2.4h-1.2zM1739.60 222.30h1.2v2.6h-1.2zM1741.08 223.10h1.2v1.8h-1.2zM1742.55 222.30h1.2v2.6h-1.2zM1744.03 223.10h1.2v2.4h-1.2zM1745.50 223.10h1.2v1.8h-1.2zM1746.98 222.30h1.2v2.6h-1.2zM1758.78 222.30h1.2v2.6h-1.2zM1760.25 223.10h1.2v1.8h-1.2zM1761.73 223.10h1.2v1.8h-1.2zM1763.20 222.30h1.2v2.6h-1.2zM1764.68 222.30h1.2v2.6h-1.2zM1766.15 222.30h1.2v2.6h-1.2zM1767.62 223.10h1.2v1.8h-1.2zM1769.10 223.10h1.2v1.8h-1.2zM1770.58 222.30h1.2v2.6h-1.2zM1772.05 223.10h1.2v1.8h-1.2zM1773.53 223.10h1.2v1.8h-1.2zM1775.00 222.30h1.2v2.6h-1.2zM1752.88 225.27h1.2v2.6h-1.2zM1754.35 226.07h1.2v1.8h-1.2zM1755.83 225.27h1.2v2.6h-1.2zM1757.30 226.07h1.2v1.8h-1.2zM1758.78 226.07h1.2v1.8h-1.2zM1760.25 226.07h1.2v1.8h-1.2zM1761.73 226.07h1.2v1.8h-1.2zM1763.20 225.27h1.2v2.6h-1.2zM1764.68 225.27h1.2v2.6h-1.2zM1766.15 226.07h1.2v2.4h-1.2zM1767.62 226.07h1.2v2.4h-1.2zM1755.83 231.21h1.2v2.6h-1.2zM1757.30 231.21h1.2v2.6h-1.2zM1758.78 232.01h1.2v1.8h-1.2zM1760.25 232.01h1.2v1.8h-1.2zM1761.73 232.01h1.2v1.8h-1.2zM1763.20 231.21h1.2v2.6h-1.2zM1764.68 232.01h1.2v1.8h-1.2zM1766.15 231.21h1.2v2.6h-1.2zM1767.62 232.01h1.2v1.8h-1.2zM1767.62 234.18h1.2v2.6h-1.2zM1769.10 234.98h1.2v1.8h-1.2zM1770.58 234.18h1.2v2.6h-1.2zM1772.05 234.98h1.2v1.8h-1.2zM1773.53 234.98h1.2v1.8h-1.2zM1775.00 234.18h1.2v2.6h-1.2zM1776.48 234.98h1.2v1.8h-1.2zM1777.95 234.18h1.2v2.6h-1.2zM1779.43 234.98h1.2v1.8h-1.2zM1780.90 234.98h1.2v1.8h-1.2zM1782.38 234.98h1.2v1.8h-1.2zM1816.74 234.18h1.2v2.6h-1.2zM1818.22 234.98h1.2v1.8h-1.2zM1819.69 234.18h1.2v2.6h-1.2zM1821.17 234.98h1.2v1.8h-1.2zM1822.64 234.98h1.2v1.8h-1.2zM1824.12 234.98h1.2v1.8h-1.2zM1754.35 240.12h1.2v2.6h-1.2zM1755.83 240.92h1.2v2.4h-1.2zM1757.30 240.12h1.2v2.6h-1.2zM1758.78 240.92h1.2v1.8h-1.2zM1760.25 240.92h1.2v1.8h-1.2zM1761.73 240.92h1.2v1.8h-1.2zM1763.20 240.12h1.2v2.6h-1.2zM1764.68 240.92h1.2v1.8h-1.2zM1766.15 240.92h1.2v2.4h-1.2zM1767.62 240.92h1.2v1.8h-1.2zM1745.50 254.97h1.2v2.6h-1.2zM1746.98 255.77h1.2v2.4h-1.2zM1748.45 254.97h1.2v2.6h-1.2zM1749.93 255.77h1.2v1.8h-1.2zM1751.40 255.77h1.2v1.8h-1.2zM1752.88 255.77h1.2v1.8h-1.2zM1754.35 254.97h1.2v2.6h-1.2zM1755.83 255.77h1.2v1.8h-1.2zM1757.30 255.77h1.2v2.4h-1.2zM1758.78 255.77h1.2v1.8h-1.2zM1773.53 254.97h1.2v2.6h-1.2zM1775.00 254.97h1.2v2.6h-1.2zM1776.48 255.77h1.2v1.8h-1.2zM1777.95 254.97h1.2v2.6h-1.2zM1779.43 255.77h1.2v1.8h-1.2zM1780.90 254.97h1.2v2.6h-1.2zM1782.38 255.77h1.2v1.8h-1.2zM1783.85 255.77h1.2v1.8h-1.2zM1785.33 255.77h1.2v1.8h-1.2zM1786.80 254.97h1.2v2.6h-1.2zM1788.28 255.77h1.2v1.8h-1.2zM1789.75 254.97h1.2v2.6h-1.2zM1791.23 255.77h1.2v2.4h-1.2zM1792.70 255.77h1.2v1.8h-1.2zM1794.18 254.97h1.2v2.6h-1.2zM1739.60 260.91h1.2v2.6h-1.2zM1741.08 261.71h1.2v1.8h-1.2zM1742.55 260.91h1.2v2.6h-1.2zM1744.03 261.71h1.2v2.4h-1.2zM1745.50 261.71h1.2v1.8h-1.2zM1746.98 260.91h1.2v2.6h-1.2zM1758.78 260.91h1.2v2.6h-1.2zM1760.25 261.71h1.2v1.8h-1.2zM1761.73 261.71h1.2v1.8h-1.2zM1763.20 260.91h1.2v2.6h-1.2zM1764.68 260.91h1.2v2.6h-1.2zM1766.15 260.91h1.2v2.6h-1.2zM1767.62 261.71h1.2v1.8h-1.2zM1769.10 261.71h1.2v1.8h-1.2zM1770.58 260.91h1.2v2.6h-1.2zM1772.05 261.71h1.2v1.8h-1.2zM1773.53 261.71h1.2v1.8h-1.2zM1775.00 260.91h1.2v2.6h-1.2zM1752.88 263.88h1.2v2.6h-1.2zM1754.35 264.68h1.2v1.8h-1.2zM1755.83 264.68h1.2v1.8h-1.2zM1757.30 263.88h1.2v2.6h-1.2zM1758.78 263.88h1.2v2.6h-1.2zM1760.25 264.68h1.2v1.8h-1.2zM1761.73 263.88h1.2v2.6h-1.2zM1763.20 263.88h1.2v2.6h-1.2zM1754.35 266.85h1.2v2.6h-1.2zM1755.83 267.65h1.2v1.8h-1.2zM1757.30 267.65h1.2v1.8h-1.2zM1758.78 266.85h1.2v2.6h-1.2zM1760.25 267.65h1.2v1.8h-1.2zM1761.73 267.65h1.2v1.8h-1.2zM1758.78 269.82h1.2v2.6h-1.2zM1760.25 270.62h1.2v1.8h-1.2zM1761.73 269.82h1.2v2.6h-1.2zM1763.20 270.62h1.2v1.8h-1.2zM1764.68 270.62h1.2v1.8h-1.2zM1766.15 270.62h1.2v1.8h-1.2zM1754.35 275.76h1.2v2.6h-1.2zM1755.83 276.56h1.2v1.8h-1.2zM1757.30 276.56h1.2v1.8h-1.2zM1758.78 275.76h1.2v2.6h-1.2zM1754.35 278.73h1.2v2.6h-1.2zM1755.83 279.53h1.2v1.8h-1.2zM1757.30 279.53h1.2v1.8h-1.2zM1758.78 279.53h1.2v1.8h-1.2zM1760.25 278.73h1.2v2.6h-1.2zM1761.73 278.73h1.2v2.6h-1.2zM1763.20 279.53h1.2v1.8h-1.2zM1764.68 279.53h1.2v1.8h-1.2zM1754.35 281.70h1.2v2.6h-1.2zM1755.83 281.70h1.2v2.6h-1.2zM1757.30 282.50h1.2v1.8h-1.2zM1758.78 282.50h1.2v1.8h-1.2zM1760.25 282.50h1.2v1.8h-1.2zM1761.73 281.70h1.2v2.6h-1.2zM1763.20 282.50h1.2v1.8h-1.2zM1764.68 281.70h1.2v2.6h-1.2zM1766.15 281.70h1.2v2.6h-1.2zM1767.62 282.50h1.2v1.8h-1.2zM1769.10 281.70h1.2v2.6h-1.2zM1770.58 281.70h1.2v2.6h-1.2zM1772.05 282.50h1.2v1.8h-1.2zM1773.53 282.50h1.2v1.8h-1.2zM1811.88 281.70h1.2v2.6h-1.2zM1813.35 282.50h1.2v1.8h-1.2zM1814.83 282.50h1.2v1.8h-1.2zM1816.30 281.70h1.2v2.6h-1.2z" fill="#4ec9b0" fill-opacity="0.65"/><path d="M1767.62 213.39h1.2v2.6h-1.2zM1769.10 214.19h1.2v1.8h-1.2zM1770.58 214.19h1.2v2.4h-1.2zM1739.60 219.33h1.2v2.6h-1.2zM1741.08 220.13h1.2v1.8h-1.2zM1742.55 220.13h1.2v1.8h-1.2zM1744.03 220.13h1.2v1.8h-1.2zM1745.50 220.13h1.2v1.8h-1.2zM1746.98 220.13h1.2v1.8h-1.2zM1748.45 220.13h1.2v1.8h-1.2zM1749.93 219.33h1.2v2.6h-1.2zM1751.40 220.13h1.2v1.8h-1.2zM1777.95 223.10h1.2v1.8h-1.2zM1779.43 223.10h1.2v1.8h-1.2zM1780.90 223.10h1.2v1.8h-1.2zM1782.38 222.30h1.2v2.6h-1.2zM1783.85 223.10h1.2v1.8h-1.2zM1785.33 223.10h1.2v1.8h-1.2zM1786.80 222.30h1.2v2.6h-1.2zM1745.50 228.24h1.2v2.6h-1.2zM1746.98 229.04h1.2v1.8h-1.2zM1748.45 228.24h1.2v2.6h-1.2zM1749.93 228.24h1.2v2.6h-1.2zM1751.40 229.04h1.2v1.8h-1.2zM1745.50 231.21h1.2v2.6h-1.2zM1746.98 231.21h1.2v2.6h-1.2zM1748.45 232.01h1.2v1.8h-1.2zM1749.93 232.01h1.2v1.8h-1.2zM1751.40 232.01h1.2v1.8h-1.2zM1748.45 234.98h1.2v1.8h-1.2zM1749.93 234.98h1.2v1.8h-1.2zM1751.40 234.18h1.2v2.6h-1.2zM1752.88 234.98h1.2v1.8h-1.2zM1754.35 234.98h1.2v1.8h-1.2zM1755.83 234.18h1.2v2.6h-1.2zM1757.30 234.98h1.2v1.8h-1.2zM1758.78 234.18h1.2v2.6h-1.2zM1760.25 234.98h1.2v1.8h-1.2zM1761.73 234.98h1.2v1.8h-1.2zM1763.20 234.98h1.2v1.8h-1.2zM1798.60 234.98h1.2v1.8h-1.2zM1800.08 234.98h1.2v1.8h-1.2zM1801.55 234.98h1.2v1.8h-1.2zM1803.03 234.18h1.2v2.6h-1.2zM1804.50 234.18h1.2v2.6h-1.2zM1805.98 234.98h1.2v1.8h-1.2zM1807.45 234.18h1.2v2.6h-1.2zM1808.93 234.98h1.2v1.8h-1.2zM1810.40 234.98h1.2v1.8h-1.2zM1827.07 234.18h1.2v2.6h-1.2zM1828.54 234.98h1.2v1.8h-1.2zM1830.02 234.98h1.2v1.8h-1.2zM1831.49 234.98h1.2v2.4h-1.2zM1832.97 234.18h1.2v2.6h-1.2zM1834.44 234.98h1.2v1.8h-1.2zM1835.92 234.98h1.2v1.8h-1.2zM1837.39 234.98h1.2v1.8h-1.2zM1838.87 234.98h1.2v2.4h-1.2zM1840.34 234.98h1.2v1.8h-1.2zM1745.50 240.12h1.2v2.6h-1.2zM1746.98 240.92h1.2v1.8h-1.2zM1748.45 240.92h1.2v1.8h-1.2zM1749.93 240.92h1.2v1.8h-1.2zM1739.60 257.94h1.2v2.6h-1.2zM1741.08 258.74h1.2v1.8h-1.2zM1742.55 258.74h1.2v1.8h-1.2zM1744.03 258.74h1.2v1.8h-1.2zM1745.50 258.74h1.2v1.8h-1.2zM1746.98 258.74h1.2v1.8h-1.2zM1748.45 258.74h1.2v1.8h-1.2zM1749.93 257.94h1.2v2.6h-1.2zM1751.40 258.74h1.2v1.8h-1.2zM1777.95 261.71h1.2v1.8h-1.2zM1779.43 261.71h1.2v1.8h-1.2zM1780.90 261.71h1.2v1.8h-1.2zM1782.38 260.91h1.2v2.6h-1.2zM1783.85 261.71h1.2v1.8h-1.2zM1785.33 261.71h1.2v1.8h-1.2zM1786.80 260.91h1.2v2.6h-1.2zM1745.50 266.85h1.2v2.6h-1.2zM1746.98 267.65h1.2v1.8h-1.2zM1748.45 266.85h1.2v2.6h-1.2zM1749.93 267.65h1.2v2.4h-1.2zM1748.45 270.62h1.2v1.8h-1.2zM1749.93 269.82h1.2v2.6h-1.2zM1751.40 270.62h1.2v1.8h-1.2zM1752.88 269.82h1.2v2.6h-1.2zM1754.35 269.82h1.2v2.6h-1.2zM1751.40 273.59h1.2v1.8h-1.2zM1752.88 272.79h1.2v2.6h-1.2zM1754.35 273.59h1.2v1.8h-1.2zM1755.83 272.79h1.2v2.6h-1.2zM1757.30 272.79h1.2v2.6h-1.2zM1758.78 273.59h1.2v1.8h-1.2zM1760.25 273.59h1.2v1.8h-1.2zM1761.73 273.59h1.2v1.8h-1.2zM1767.62 278.73h1.2v2.6h-1.2zM1769.10 279.53h1.2v1.8h-1.2zM1770.58 279.53h1.2v1.8h-1.2zM1772.05 279.53h1.2v2.4h-1.2zM1773.53 278.73h1.2v2.6h-1.2zM1775.00 278.73h1.2v2.6h-1.2zM1776.48 282.50h1.2v1.8h-1.2zM1777.95 282.50h1.2v1.8h-1.2zM1779.43 281.70h1.2v2.6h-1.2zM1780.90 282.50h1.2v1.8h-1.2zM1782.38 282.50h1.2v1.8h-1.2zM1783.85 282.50h1.2v1.8h-1.2zM1785.33 282.50h1.2v1.8h-1.2zM1786.80 282.50h1.2v1.8h-1.2zM1788.28 281.70h1.2v2.6h-1.2zM1801.55 282.50h1.2v1.8h-1.2zM1803.03 281.70h1.2v2.6h-1.2zM1804.50 282.50h1.2v1.8h-1.2zM1805.98 281.70h1.2v2.6h-1.2zM1807.45 281.70h1.2v2.6h-1.2z" fill="#9cdcfe" fill-opacity="0.65"/><path d="M1742.55 226.07h1.2v1.8h-1.2zM1744.03 226.07h1.2v1.8h-1.2zM1745.50 225.27h1.2v2.6h-1.2zM1746.98 226.07h1.2v1.8h-1.2zM1748.45 226.07h1.2v1.8h-1.2zM1749.93 226.07h1.2v1.8h-1.2zM1742.55 264.68h1.2v1.8h-1.2zM1744.03 264.68h1.2v1.8h-1.2zM1745.50 263.88h1.2v2.6h-1.2zM1746.98 264.68h1.2v1.8h-1.2zM1748.45 264.68h1.2v1.8h-1.2zM1749.93 264.68h1.2v1.8h-1.2z" fill="#c586c0" fill-opacity="0.65"/><path d="M1779.43 278.73h1.2v2.6h-1.2zM1780.90 278.73h1.2v2.6h-1.2z" fill="#b5cea8" fill-opacity="0.65"/></svg><div class="abs" style="left:1895px;top:193px;width:1px;height:1025px;background:#171717"></div><div class="abs" style="left:1896px;top:512px;width:19px;height:3px;background:#8a8a8a"></div><div class="abs" style="left:84px;top:1219px;width:1831px;height:32px;background:#181818"></div><div class="abs" style="left:84px;top:1219px;width:49.5px;height:32px;background:#0078d4"></div><svg style="left:94px;top:1220px" width="30" height="30"><g fill="none" stroke="#e8f1fb" stroke-width="1.6" stroke-linecap="round" stroke-linejoin="round"><path d="M8.4 11.5 L13.4 16.8 L8.6 22.3"/><path d="M19.6 6.4 L14.8 11.7 L19.6 16.8"/></g></svg><svg style="left:146.5px;top:1225.5px" width="18" height="18" viewBox="0 0 18 18" ><g fill="none" stroke="#cccccc" stroke-width="1.4"><circle cx="9" cy="9" r="8"/><path d="M5.8 5.8 L12.2 12.2 M12.2 5.8 L5.8 12.2"/></g></svg><div class="tx" style="left:171.5px;top:1226.5px;font-size:18.8px">0</div><svg style="left:189.0px;top:1225.5px" width="18" height="18" viewBox="0 0 18 18" ><g fill="none" stroke="#cccccc" stroke-width="1.4" stroke-linejoin="round"><path d="M9 1.5 L17.3 16.5 H0.7 Z"/><path d="M9 6.5 V11.5"/></g><circle cx="9" cy="13.8" r="0.9" fill="#cccccc"/></svg><div class="tx" style="left:213.5px;top:1226.5px;font-size:18.8px">0</div><svg style="left:250.5px;top:1225.5px" width="18" height="18" viewBox="0 0 18 18" ><g fill="none" stroke="#cccccc" stroke-width="1.4"><path d="M5 3 a6 6 0 0 0 0 8 M13 3 a6 6 0 0 1 0 8 M2.5 1 a9 9 0 0 0 0 12 M15.5 1 a9 9 0 0 1 0 12"/><circle cx="9" cy="7" r="1.5"/><path d="M9 8.5 L5.5 17 M9 8.5 L12.5 17 M7 13 h4"/></g></svg><div class="tx" style="left:274px;top:1226.5px;font-size:18.8px">0</div><div class="abs" style="left:1631.5px;top:1219px;width:225px;height:32px;background:#3a3a3a"></div><div class="tx" style="left:1189px;top:1226.5px;font-size:18.8px">Ln 24, Col 39</div><div class="tx" style="left:1326px;top:1226.5px;font-size:18.8px">Spaces: 2</div><div class="tx" style="left:1432.5px;top:1226.5px;font-size:18.8px">UTF-8</div><div class="tx" style="left:1510px;top:1226.5px;font-size:18.8px">LF</div><div class="tx" style="left:1582px;top:1226.5px;font-size:18.8px">Dart</div><div class="tx" style="left:1638px;top:1226.5px;font-size:18.8px">iPhone 14 (ios simulator)</div><div class="tx" style="left:1553px;top:1225.5px;font-size:18.8px">{ }</div><svg style="left:1874.5px;top:1225.0px" width="18" height="19" viewBox="0 0 18 19" ><g fill="none" stroke="#cccccc" stroke-width="1.4" stroke-linejoin="round"><path d="M9 2 a5 5 0 0 1 5 5 v5 l2 2.5 H2 l2 -2.5 v-5 a5 5 0 0 1 5 -5z"/><path d="M7 16.5 a2 2 0 0 0 4 0"/></g></svg></div><div class="winborder"></div><div class="abs" style="left:83.5px;top:108px;width:3px;height:71.5px;background:#0078d4"></div><div class="abs" style="left:1620.5px;top:1186.5px;width:240px;height:100px;border:4.5px solid #ff2a0a"></div><svg width="1999" height="1361" style="left:0;top:0"><line x1="1437.5" y1="1102.5" x2="1568" y2="1172.5" stroke="#ff2a0a" stroke-width="4.8" stroke-linecap="round"/><polygon points="1586.2,1182.8 1563.4,1182.8 1573.4,1164.4" fill="#ff2a0a"/></svg></body></html>
